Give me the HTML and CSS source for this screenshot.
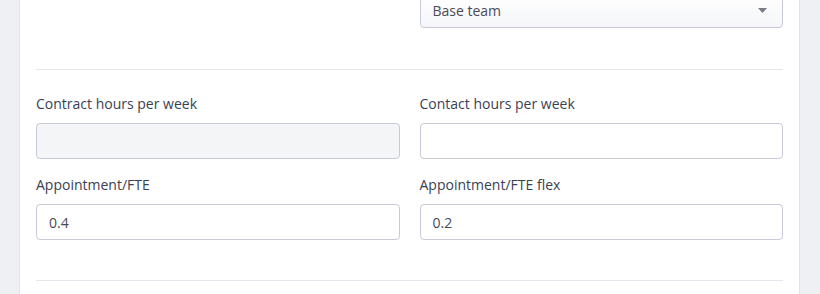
FILE: index.html
```html
<!DOCTYPE html>
<html lang="en">
<head>
  <meta charset="UTF-8">
  <meta name="viewport" content="width=device-width, initial-scale=1.0">
  <link rel="stylesheet" href="styles.css">
  <title>Employee contract</title>
</head>
<body>
  <div class="page">
    <form class="card">
      <div class="row">
        <div class="field"></div>
        <div class="field">
          <div class="select">
            <span>Base team</span>
            <svg class="caret" width="9" height="5" viewBox="0 0 9 5"><path d="M0 0h9L4.5 5z" fill="#7a7a88"/></svg>
          </div>
        </div>
      </div>

      <hr class="divider">

      <div class="row">
        <div class="field">
          <label>Contract hours per week</label>
          <input type="text" class="input" disabled>
        </div>
        <div class="field">
          <label>Contact hours per week</label>
          <input type="text" class="input">
        </div>
      </div>

      <div class="row">
        <div class="field">
          <label>Appointment/FTE</label>
          <input type="text" class="input" value="0.4">
        </div>
        <div class="field">
          <label>Appointment/FTE flex</label>
          <input type="text" class="input" value="0.2">
        </div>
      </div>

      <hr class="divider divider-end">
    </form>
  </div>
</body>
</html>
```

FILE: styles.css
```css
body {
  margin: 0;
  font-family: 'Open Sans', 'Noto Sans', sans-serif;
  font-size: 14px;
  background-color: #eff0f4;
}

.page {
  padding: 0 20px 0 19px;
  height: 294px;
  overflow: hidden;
}

.card {
  background-color: #fff;
  border: 1px solid #e2e3e9;
  border-top: none;
  margin-top: -8px;
  padding: 0 16px 40px;
}

.row {
  display: grid;
  grid-template-columns: 1fr 1fr;
  gap: 20px;
  margin-bottom: 15px;
}

.field {
  display: flex;
  flex-direction: column;
}

label {
  color: #3a3f52;
  line-height: 20px;
  padding-top: 1px;
  margin-bottom: 9px;
}

.input {
  box-sizing: border-box;
  height: 36px;
  padding: 0 12px;
  border: 1px solid #c9c9d9;
  border-radius: 4px;
  font-family: inherit;
  font-size: 14px;
  color: #4a4a57;
  background-color: #fff;
  outline: none;
}

.input:disabled {
  background-color: #f4f5f7;
}

.select {
  box-sizing: border-box;
  height: 36px;
  padding: 0 15px 0 12px;
  border: 1px solid #c9c9d9;
  border-radius: 4px;
  background: linear-gradient(#ffffff, #f5f6f9);
  color: #4a4a57;
  display: flex;
  align-items: center;
  justify-content: space-between;
}

.divider {
  border: none;
  border-top: 1px solid #e6e7ec;
  margin: 41px 0 23px;
}

.row:last-of-type {
  margin-bottom: 0;
}

.divider-end {
  margin-top: 40px;
}
```
